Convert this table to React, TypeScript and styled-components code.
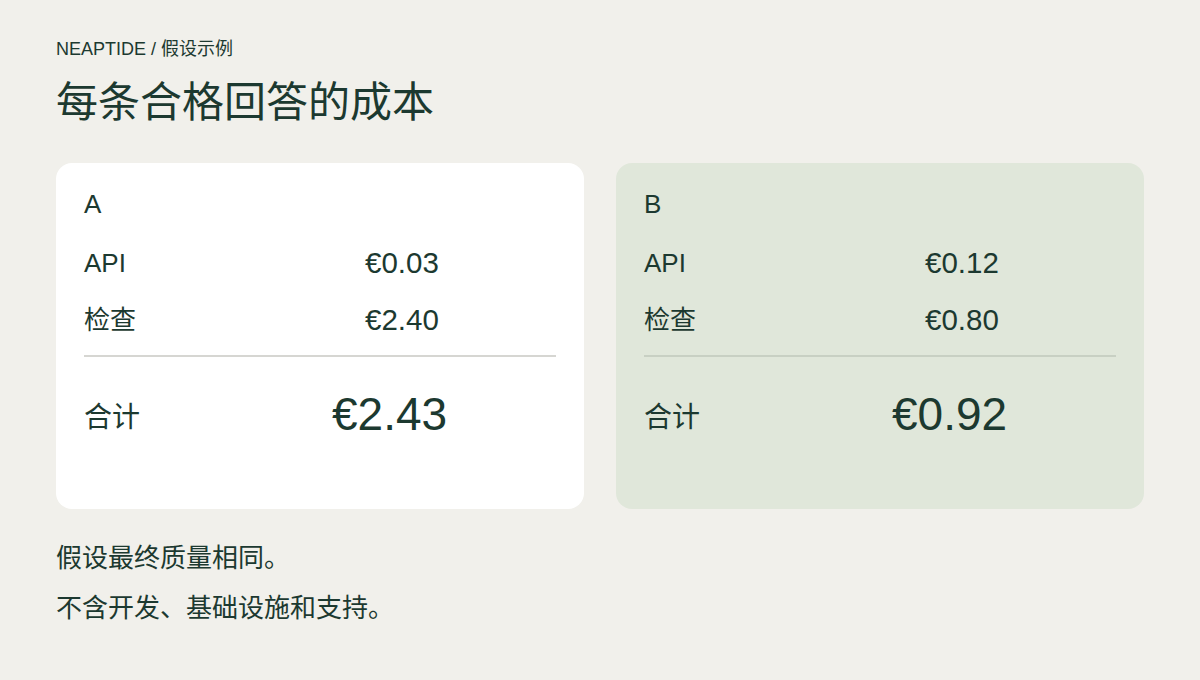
import React from "react";
import styled, { createGlobalStyle } from "styled-components";

const Global = createGlobalStyle`
  html, body { margin: 0; padding: 0; background: #f1f0eb; }
  body {
    font-family: "Liberation Sans", "Noto Sans CJK SC", sans-serif;
    color: #1c3930;
  }
`;

const Page = styled.div`
  width: 1200px;
  height: 680px;
  box-sizing: border-box;
  padding: 38px 56px 0;
  display: flex;
  flex-direction: column;
`;

const Eyebrow = styled.div`
  font-size: 18px;
  line-height: 22px;
`;

const Title = styled.h1`
  margin: 15px 0 0;
  font-size: 42px;
  line-height: 56px;
  font-weight: 400;
`;

const Cards = styled.div`
  margin-top: 32px;
  display: grid;
  grid-template-columns: 1fr 1fr;
  gap: 32px;
`;

const Card = styled.div<{ $tone: "plain" | "green" }>`
  box-sizing: border-box;
  height: 346px;
  border-radius: 16px;
  padding: 28px;
  background: ${(p) => (p.$tone === "green" ? "#e0e7da" : "#ffffff")};
  display: flex;
  flex-direction: column;
`;

const Name = styled.div`
  font-size: 26px;
  line-height: 32px;
  margin-top: -3px;
  margin-bottom: 25px;
`;

const Row = styled.div<{ $total?: boolean }>`
  display: grid;
  grid-template-columns: ${(p) => (p.$total ? "248px" : "281px")} auto;
  align-items: center;
  height: ${(p) => (p.$total ? "52px" : "36px")};
  margin-bottom: ${(p) => (p.$total ? "0" : "21px")};
`;

const Label = styled.span<{ $total?: boolean }>`
  font-size: ${(p) => (p.$total ? "28px" : "26px")};
  line-height: 1;
  ${(p) => (p.$total ? "padding-top: 8px;" : "")}
`;

const Value = styled.span<{ $total?: boolean }>`
  font-size: ${(p) => (p.$total ? "46px" : "29.5px")};
  line-height: 1;
`;

const Divider = styled.div<{ $tone: "plain" | "green" }>`
  height: 1.5px;
  background: ${(p) => (p.$tone === "green" ? "#c8d0c3" : "#d6d6d2")};
  margin: -4px 0 31px;
`;

const Notes = styled.div`
  margin-top: 32px;
  display: flex;
  flex-direction: column;
  gap: 16px;
`;

const Note = styled.p`
  margin: 0;
  font-size: 26px;
  line-height: 34px;
`;

type Option = {
  name: string;
  tone: "plain" | "green";
  api: string;
  check: string;
  total: string;
};

const options: Option[] = [
  { name: "A", tone: "plain", api: "€0.03", check: "€2.40", total: "€2.43" },
  { name: "B", tone: "green", api: "€0.12", check: "€0.80", total: "€0.92" },
];

export default function App() {
  return (
    <>
      <Global />
      <Page>
        <Eyebrow>NEAPTIDE / 假设示例</Eyebrow>
        <Title>每条合格回答的成本</Title>
        <Cards>
          {options.map((o) => (
            <Card key={o.name} $tone={o.tone}>
              <Name>{o.name}</Name>
              <Row>
                <Label>API</Label>
                <Value>{o.api}</Value>
              </Row>
              <Row>
                <Label>检查</Label>
                <Value>{o.check}</Value>
              </Row>
              <Divider $tone={o.tone} />
              <Row $total>
                <Label $total>合计</Label>
                <Value $total>{o.total}</Value>
              </Row>
            </Card>
          ))}
        </Cards>
        <Notes>
          <Note>假设最终质量相同。</Note>
          <Note>不含开发、基础设施和支持。</Note>
        </Notes>
      </Page>
    </>
  );
}
